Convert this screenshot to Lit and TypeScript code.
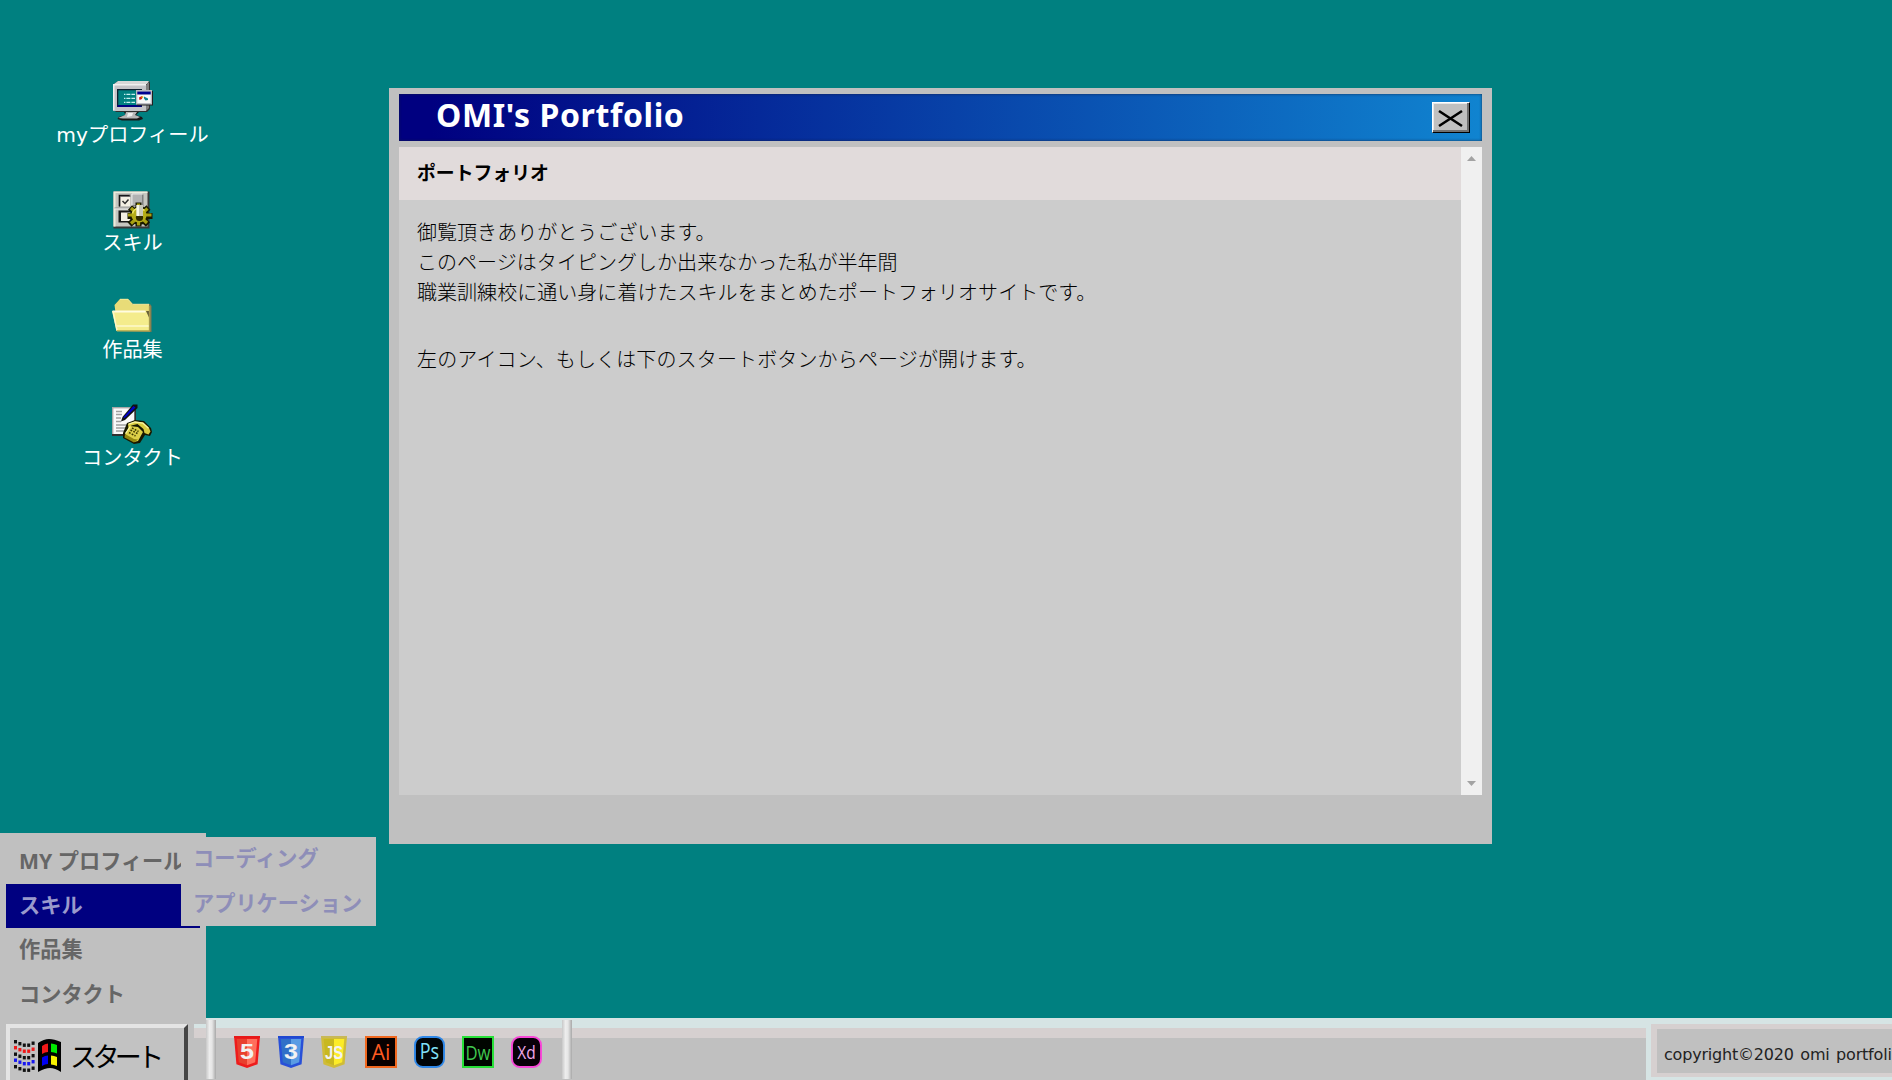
import { LitElement, html, css, svg } from "lit";
import { customElement } from "lit/decorators.js";

const monitorIcon = svg`
  <polygon points="5,0 36,0 37,2 37,28 34,31 3,31 1,29 1,3" fill="#303030"/>
  <polygon points="5,0 36,0 34,3 1,3" fill="#d8d8d8"/>
  <polygon points="36,1 36,27 33,30 33,4" fill="#808080"/>
  <rect x="0" y="3" width="33" height="27" fill="#c4c4c8"/>
  <rect x="0" y="3" width="33" height="1.5" fill="#f0f0f0"/>
  <rect x="0" y="3" width="1.5" height="26" fill="#f0f0f0"/>
  <rect x="4" y="8" width="25" height="18" fill="#102030"/>
  <rect x="5.3" y="9.3" width="23" height="15" fill="#008080"/>
  <rect x="4.5" y="24" width="24" height="2" fill="#000080"/>
  <g stroke="#c8f0f0" stroke-width="1.2" stroke-dasharray="1.4 1 4 1 4 1">
    <path d="M11 13.3H22M11 17.3H22M11 21.3H22"/>
  </g>
  <rect x="24" y="10" width="16" height="14.5" fill="#202020"/>
  <rect x="23" y="9" width="16" height="14.5" fill="#b8b8c0"/>
  <rect x="24.3" y="13.5" width="13.4" height="8.6" fill="#f8f8f8"/>
  <rect x="24.3" y="10.6" width="13.4" height="2.8" fill="#000090"/>
  <path d="M26 16.5l3-1.5v3l-2.5 1z" fill="#d01818"/><rect x="28.6" y="15.2" width="1.6" height="2" fill="#e0b020"/>
  <path d="M31 15.5l4 2v1.5l-2.5.5-1.5-2z" fill="#108090"/>
  <path d="M11 31h15l-3 3 6 2 1 2-4 1.6H9L4.500 38l1-2 7-2z" fill="#181818"/>
  <path d="M13 31h11l-2 3 5 2-3 1.500H10L5 37l7-3z" fill="#b8b8b8"/>
  <path d="M15 32h5l-1 3-5 1z" fill="#eeeeee"/>`;

const skillIcon = svg`
  <g transform="translate(0.500 0.500)">
  <rect x="1" y="2" width="36" height="37" fill="#383838"/>
  <rect x="1" y="2" width="34" height="35" fill="#c6c6c0"/>
  <path d="M1 2H35V3.500H3V37H1Z" fill="#ececdc"/>
  <rect x="6" y="5" width="12" height="12" fill="#707070"/>
  <rect x="8" y="7.500" width="10" height="9.500" fill="#f4f0e4"/>
  <path d="M7 17V6H17" stroke="#181818" fill="none" stroke-width="1.200"/>
  <path d="M10 11.500l2.500 2.500 3.500-4" stroke="#303030" fill="none" stroke-width="1.500"/>
  <rect x="20" y="5" width="11" height="12" fill="#808080"/>
  <rect x="20" y="5" width="9.500" height="10.500" fill="#b2b2b2"/>
  <path d="M19.500 17V4.500H30" stroke="#eee" fill="none"/>
  <path d="M2 18.500H18" stroke="#909090"/><path d="M2 19.500H18" stroke="#eee"/>
  <rect x="6" y="21" width="12" height="12" fill="#181818"/>
  <rect x="8.500" y="23" width="9" height="8.500" fill="#f4f0e4"/>
  <path d="M26 13v24M15 26.500H40M17.500 18l18 17M36 18L17 35" stroke="#181800" stroke-width="6"/>
  <circle cx="27" cy="26" r="9.500" fill="#181800"/>
  <path d="M26 14v22M15.500 25.500H39M18.500 18.500l16 15M35 19L18.500 34" stroke="#a8a010" stroke-width="3.200"/>
  <circle cx="26.500" cy="25.500" r="7.600" fill="#b4ac18"/>
  <path d="M20 24a7 7 0 0 1 12-3" stroke="#f0e868" stroke-width="1.500" fill="none"/>
  <circle cx="27" cy="28" r="3.600" fill="#302c00"/>
  <rect x="24" y="15.500" width="6.500" height="11" fill="#c8c8b8"/>
  <rect x="24" y="15.500" width="2.500" height="11" fill="#f8f8e8"/>
  </g>`;

const folderIcon = svg`
  <path d="M3 9L8 3h8l5 5h17l1.500 2v26l-34-1z" fill="#807850"/>
  <path d="M2.500 9L8 3h8l4.500 5.500H37V15L38 34 4 20z" fill="#e8dc78"/>
  <path d="M8 3.300h8l4.500 5H37" stroke="#f4ec9c" fill="none"/>
  <path d="M0 15H34l3.500 6.500V35H4.500Z" fill="#f4ec8c"/>
  <path d="M0.500 15.500H33.500" stroke="#fffce0" stroke-width="1.800"/>
  <path d="M1 15L5 34.500" stroke="#fff8c8" stroke-width="1.400"/>
  <path d="M4 29H37v2H4z" fill="#fbf6bc"/>
  <path d="M4.500 34H38v1.600H5z" fill="#c0b458"/>
  <path d="M34 15h3v6.500z" fill="#686038"/>
  <path d="M37.600 10V35" stroke="#a49850" stroke-width="1.500"/>`;

const contactIcon = svg`
  <rect x="0" y="3" width="24" height="29" fill="#303030"/>
  <rect x="0" y="3" width="22.500" height="27" fill="#a8a8a8"/>
  <rect x="1.400" y="4.400" width="20.600" height="25.600" fill="#fafafa"/>
  <path d="M4 7.500h6M4 10.500h6M4 14h5M4 17.500h5M4 21h13M4 24h10M4 27h8" stroke="#a0a0a0" stroke-width="1.400"/>
  <path d="M21 0.500h4.500v3.500L13 16 9 17.500 10.500 13z" fill="#101010"/>
  <path d="M21.500 2L12 12.500 11.500 14.500 14 13 23.500 3.500z" fill="#0000c8"/>
  <path d="M15 19l8-3 9 1 7 7 1 4-2 4-5-1-5 8-6 1-11-6v-5z" fill="#181800"/>
  <path d="M16 20l7-2.500 8 1 6 5.500 1.500 3.500-2 3-4-1.500-1-4-6-5-6 1.500-3 3z" fill="#d8cc40"/>
  <path d="M16.500 20.200l6.500-2.200 8 1.200 5.500 5" stroke="#faf4a0" stroke-width="1.300" fill="none"/>
  <path d="M13 30l5-8 8 1 5 5-5 9-4 1z" fill="#dcd048"/>
  <path d="M13 30l9 5 4 .5-4 3-9.500-5z" fill="#948810"/>
  <path d="M18.500 26l7 3.500M17 28.500l6.500 3.500M20 24l6.500 3.500" stroke="#3c3800" stroke-width="1.500" stroke-dasharray="1.800 1.300"/>
  <path d="M13.500 29.500l4.700-7" stroke="#fcf8a8" stroke-width="1.300"/>`;

const shortcuts = [
  { label: "myプロフィール", art: monitorIcon },
  { label: "スキル", art: skillIcon },
  { label: "作品集", art: folderIcon },
  { label: "コンタクト", art: contactIcon },
];

const menuItems = ["MY プロフィール", "スキル", "作品集", "コンタクト"];

const shield = (edge: string, left: string, right: string, rim: string, label: string, size: number, len: number) => html`
  <svg class="shield" viewBox="0 0 26 32">
    <path d="M0 0H26L23.600 28.300 13 32 2.400 28.300Z" fill="${edge}" />
    <path d="M2.700 3H13V29.300L4.800 26.300Z" fill="${left}" />
    <path d="M13 3H23.300L21.200 26.300 13 29.300Z" fill="${right}" />
    <path d="M0 0H26V2H0Z" fill="${rim}" />
    <text x="${13 - len / 2}" y="22.800" textLength="${len}" lengthAdjust="spacingAndGlyphs"
      font-family="Liberation Sans, sans-serif" font-weight="700" font-size="${size}" fill="#f2f2f2">${label}</text>
  </svg>`;

const adobe = (bg: string, color: string, ink: string, radius: number, label: string, size: number, len: number) => html`
  <svg class="adobe ${radius ? "round" : ""}" viewBox="0 0 32 32" preserveAspectRatio="none">
    <rect x="1" y="1" width="30" height="30" rx="${radius}" fill="${bg}" stroke="${color}" stroke-width="2" />
    <text x="${16 - len / 2}" y="23.500" textLength="${len}" lengthAdjust="spacingAndGlyphs"
      font-family="Open Sans, Noto Sans, sans-serif" font-size="${size}" fill="${ink}">${label}</text>
  </svg>`;

@customElement("app-root")
export class AppRoot extends LitElement {
  static styles = css`
    :host {
      display: block;
      --face: #c0c0c0;
      font-family: "DejaVu Sans", "Noto Sans CJK JP", sans-serif;
    }
    * { box-sizing: border-box; }
    .desktop {
      position: relative;
      width: 100%;
      height: 1080px;
      overflow: hidden;
      background: #008080;
      display: flex;
      flex-direction: column;
      justify-content: space-between;
    }
    .shortcuts {
      width: 265px;
      padding-top: 81px;
      display: flex;
      flex-direction: column;
      align-items: center;
    }
    .shortcut {
      height: 107.600px;
      display: flex;
      flex-direction: column;
      align-items: center;
      color: #fff;
      font-size: 20.200px;
      line-height: 28px;
      white-space: nowrap;
    }
    .shortcut svg { width: 40px; height: 40px; overflow: visible; flex: none; }

    .window {
      position: absolute;
      left: 389px;
      top: 88px;
      width: 1103px;
      height: 756px;
      padding: 6px 10px;
      background: var(--face);
      display: flex;
      flex-direction: column;
      gap: 6px;
    }
    .titlebar {
      height: 47px;
      padding: 0 12px 0 37px;
      display: flex;
      align-items: center;
      justify-content: space-between;
      background: linear-gradient(90deg, #000080 3%, #1084d0);
      box-shadow: inset 0 0 3px rgba(20, 30, 60, 0.8);
    }
    .title {
      margin: 0;
      padding-bottom: 6px;
      color: #fff;
      font-family: "Noto Sans", "Open Sans", sans-serif;
      font-size: 32px;
      font-weight: 700;
      line-height: 40px;
      letter-spacing: 0.600px;
    }
    .close {
      width: 38px;
      height: 31px;
      padding: 0;
      border: 1px solid;
      border-color: #fff #000 #000 #fff;
      background: var(--face);
      box-shadow: inset -2px -2px 0 #707070, inset 1px 1px 0 #e8e8e8;
      margin-bottom: 1px;
    }
    .close svg { display: block; width: 36px; height: 29px; }
    .pane { height: 648px; display: flex; }
    .content { flex: 1; background: #ccc; }
    .heading {
      margin: 0;
      height: 53px;
      padding-left: 18px;
      background: #e1dbdb;
      font-size: 18.850px;
      line-height: 54px;
      font-weight: 700;
    }
    .copy { padding: 18px 18px; font-size: 20px; line-height: 30px; letter-spacing: 0.040px; font-weight: 300; color: #000; }
    .copy p { margin: 0 0 37px; }
    .copy p + p { letter-spacing: 0.140px; }
    .scrollbar {
      width: 21px;
      background: #f0f0f0;
      display: flex;
      flex-direction: column;
      align-items: center;
      justify-content: space-between;
      padding: 9px 0;
    }
    .scrollbar svg { width: 9px; height: 5px; display: block; }

    .menu {
      position: absolute;
      left: 0;
      top: 833px;
      width: 206px;
      height: 191px;
      padding: 7px 6px;
      background: var(--face);
      font-family: "Noto Sans", "Noto Sans CJK JP", sans-serif;
      font-size: 21.200px;
      font-weight: 700;
      color: #666;
      z-index: 2;
    }
    .item { height: 44.200px; line-height: 41px; padding-left: 13px; white-space: nowrap; }
    .item.active { background: #000080; color: #9999cc; }
    .submenu {
      position: absolute;
      left: 181px;
      top: 4px;
      width: 195px;
      height: 89px;
      padding-left: 12px;
      background: var(--face);
      color: #8e8eb8;
    }
    .submenu .entry { height: 45px; line-height: 42px; white-space: nowrap; }

    .taskbar { height: 62px; display: flex; background: var(--face); }
    .start-cell { width: 194px; padding: 6px 6px 0; }
    .start {
      width: 182px;
      height: 56px;
      border: 0 solid #e4e4e4;
      border-width: 4px 4px 0;
      border-right-color: #454545;
      padding: 0 0 0 4px;
      display: flex;
      align-items: center;
      background: #c2c2c2;
    }
    .flag { width: 48px; height: 36px; margin-top: 3px; flex: none; }
    .start-label {
      font-family: "Noto Sans CJK JP", sans-serif;
      font-size: 27px;
      line-height: 40px;
      letter-spacing: -4.600px;
      margin: 3px 0 0 8px;
      color: #000;
      white-space: nowrap;
    }
    .tray {
      flex: 1;
      display: flex;
      align-items: flex-start;
      background: linear-gradient(#d6e4e4 0 10px, #d6d0d0 10px 20px, var(--face) 20px);
    }
    .divider {
      width: 10px;
      height: 59px;
      margin-top: 2px;
      background: linear-gradient(90deg, #c8c8c8, #ededed 35%, #e6e6e6 60%, #a8a8a8);
      flex: none;
    }
    .divider.first { margin-left: 12px; }
    .launchers { display: flex; width: 346px; padding: 18px 0 0 18px; }
    .launchers svg { display: block; flex: none; height: 32px; }
    .shield { width: 26px; margin-right: 17.500px; }
    .adobe { width: 32px; margin-right: 17.300px; }
    .adobe.round { width: 31px; }
    .copyright-cell {
      width: 246px;
      padding: 6px 0 3px 5px;
      background: #d6e4e4;
    }
    .copyright {
      height: 53px;
      border: solid #d6d0d0;
      border-width: 5px 0 4px 6px;
      background: var(--face);
      padding-left: 7px;
      font-size: 16px;
      line-height: 51px;
      letter-spacing: -0.200px;
      word-spacing: 1.700px;
      color: #222;
      white-space: nowrap;
      overflow: hidden;
    }
  `;

  private renderWindow() {
    return html`
      <section class="window">
        <header class="titlebar">
          <h1 class="title">OMI's Portfolio</h1>
          <button class="close" aria-label="close">
            <svg viewBox="0 0 36 29"><path d="M6 8L29 23M29 8L6 23" stroke="#000" stroke-width="2.600" /></svg>
          </button>
        </header>
        <div class="pane">
          <div class="content">
            <h3 class="heading">ポートフォリオ</h3>
            <div class="copy">
              <p>御覧頂きありがとうございます。<br />このページはタイピングしか出来なかった私が半年間<br />職業訓練校に通い身に着けたスキルをまとめたポートフォリオサイトです。</p>
              <p>左のアイコン、もしくは下のスタートボタンからページが開けます。</p>
            </div>
          </div>
          <div class="scrollbar">
            <svg viewBox="0 0 9 5"><path d="M0 5L4.500 0 9 5Z" fill="#a3a3a3" /></svg>
            <svg viewBox="0 0 9 5"><path d="M0 0L4.500 5 9 0Z" fill="#a3a3a3" /></svg>
          </div>
        </div>
      </section>`;
  }

  private renderMenu() {
    return html`
      <nav class="menu">
        ${menuItems.map((m, i) => html`<div class="item ${i === 1 ? "active" : ""}">${m}</div>`)}
        <div class="submenu">
          <div class="entry">コーディング</div>
          <div class="entry">アプリケーション</div>
        </div>
      </nav>`;
  }

  private renderFlag() {
    // Each stripe is a run of five blocks that sags in the middle.
    const steps = [0, 2, 3.5, 3.5, 1.5];
    const row = (y: number, color: string) =>
      steps.map((dy, i) => svg`<rect x="${i * 4.4}" y="${y + dy}" width="3" height="3.400" fill="${color}"/>`);
    return html`
      <svg class="flag" viewBox="0 0 48 36">
        ${row(2, "#111")}${row(8, "#f01818")}${row(14.5, "#111")}${row(20.5, "#1818f0")}${row(27, "#111")}
        <path d="M24 5Q30 1 35 1T47 4V34Q41 30 36 30T24 34Z" fill="#000" />
        <path d="M28 8Q31 5.500 34 5.500V14Q31 14 28 16Z" fill="#f01818" />
        <path d="M37 5.500Q40 5.500 43 7V15.500Q40 14 37 14Z" fill="#00e800" />
        <path d="M28 19.500Q31 17.500 34 17.500V26Q31 26 28 28Z" fill="#0000f0" />
        <path d="M37 17.500Q40 17.500 43 19V28Q40 26.500 37 26.500Z" fill="#f8f000" />
      </svg>`;
  }

  render() {
    return html`
      <main class="desktop">
        <div class="shortcuts">
          ${shortcuts.map(
            (s) => html`<div class="shortcut"><svg viewBox="0 0 40 40">${s.art}</svg><span>${s.label}</span></div>`
          )}
        </div>
        ${this.renderWindow()} ${this.renderMenu()}
        <footer class="taskbar">
          <div class="start-cell">
            <div class="start">${this.renderFlag()}<span class="start-label">スタート</span></div>
          </div>
          <div class="tray">
            <div class="divider first"></div>
            <div class="launchers">
              ${shield("#ee1c1c", "#e8402e", "#ff6f5c", "#e81818", "5", 22, 14)}
              ${shield("#2850d8", "#3070c8", "#5a9ce4", "#2048d0", "3", 22, 14)}
              ${shield("#d0bc38", "#c8b820", "#fcec28", "#c8b858", "JS", 19, 18)}
              ${adobe("#080000", "#f06820", "#ff5a20", 0, "Ai", 22, 19)}
              ${adobe("#000508", "#3088e8", "#80e0f8", 8, "Ps", 22, 20)}
              ${adobe("#000500", "#28e038", "#40c850", 0, "Dw", 20, 25)}
              ${adobe("#080008", "#f848d8", "#f0a8e8", 8, "Xd", 19, 19)}
            </div>
            <div class="divider"></div>
          </div>
          <div class="copyright-cell"><div class="copyright">copyright©2020 omi portfolio</div></div>
        </footer>
      </main>`;
  }
}
